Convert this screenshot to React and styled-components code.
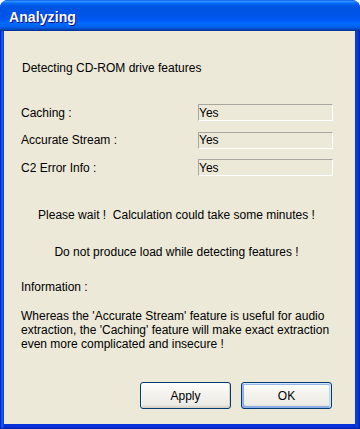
import React from "react";
import styled, { createGlobalStyle } from "styled-components";

const Global = createGlobalStyle`
  html, body { margin: 0; padding: 0; background: #ffffff; }
  #root { width: 360px; height: 429px; }
`;

const Window = styled.div`
  width: 360px;
  height: 429px;
  display: flex;
  flex-direction: column;
  box-sizing: border-box;
  border-radius: 8px 8px 0 0;
  overflow: hidden;
  background: linear-gradient(to right, #0019cf 0px, #0831d9 1px, #166aee 2px, #0831d9 4px, #0831d9 calc(100% - 5px), #0a43e0 calc(100% - 3px), #001ea0 100%);
  font-family: "Liberation Sans", Arial, sans-serif;
  font-size: 12px;
  color: #000;
`;

const TitleBar = styled.div`
  height: 31px;
  flex: none;
  display: flex;
  align-items: center;
  padding: 2px 0 0 9px;
  box-sizing: border-box;
  background: linear-gradient(to bottom, #0058ee 0%, #3593ff 4%, #288eff 6%, #127dff 8%, #036ffc 10%, #0262ee 14%, #0057e5 20%, #0054e3 24%, #0055eb 56%, #005bf5 66%, #026afe 76%, #0062ef 86%, #0052d6 92%, #0040ab 96%, #003092 100%);
`;

const Title = styled.span`
  color: #fff;
  font-weight: bold;
  font-size: 14px;
  letter-spacing: 0.1px;
  text-shadow: 1px 1px #0f1089;
`;

const FrameBottom = styled.div`
  flex: 1;
  display: flex;
  flex-direction: column;
  padding: 0 5px 5px 4px;
  background: linear-gradient(to bottom, transparent calc(100% - 2px), #001ea0 100%);
`;

const Client = styled.div`
  flex: 1;
  background: #ece9d8;
  display: flex;
  flex-direction: column;
  padding: 30px 23px 15px 17px;
  box-sizing: border-box;
  line-height: 14px;
`;

const Line = styled.div`
  margin-top: ${(p) => p.$top || 0}px;
  padding-left: ${(p) => p.$indent || 0}px;
  text-align: ${(p) => (p.$center ? "center" : "left")};
  white-space: nowrap;
`;

const FieldGrid = styled.div`
  margin-top: 29px;
  display: grid;
  grid-template-columns: 177px 135px;
  grid-auto-rows: 17px;
  row-gap: 10.5px;
  align-items: center;
`;

const Label = styled.div`
  white-space: nowrap;
`;

const Field = styled.div`
  height: 17px;
  box-sizing: border-box;
  border: 1px solid;
  border-color: #a7a6a0 #ffffff #ffffff #a7a6a0;
  display: flex;
  align-items: center;
  padding-left: 0px;
`;

const Paragraph = styled.div`
  margin-top: 15px;
  padding-left: 0;
  white-space: nowrap;
  line-height: 14px;
`;

const ButtonRow = styled.div`
  margin-top: auto;
  display: flex;
  justify-content: flex-end;
  gap: 10px;
`;

const Button = styled.button`
  width: 91px;
  height: 27px;
  box-sizing: border-box;
  border: 1px solid #003c74;
  border-radius: 3px;
  font-family: "Liberation Sans", Arial, sans-serif;
  font-size: 12px;
  color: #000;
  padding: 0;
  background: linear-gradient(180deg, #ffffff 0%, #f4f3ee 40%, #ecebe6 86%, #d6d0c5 100%);
  box-shadow: ${(p) =>
    p.$default
      ? "inset -1px 1px #cee7ff, inset 1px 2px #98b8ea, inset -2px 2px #bcd4f6, inset 1px -1px #89ade4, inset 2px -2px #89ade4"
      : "inset -1px -1px #d6d0c5, inset 1px 1px #fff"};
`;

const rows = [
  ["Caching :", "Yes"],
  ["Accurate Stream :", "Yes"],
  ["C2 Error Info :", "Yes"],
];

export default function App() {
  return (
    <>
      <Global />
      <Window>
        <TitleBar>
          <Title>Analyzing</Title>
        </TitleBar>
        <FrameBottom>
          <Client>
            <Line $indent={1}>Detecting CD-ROM drive features</Line>
            <FieldGrid>
              {rows.map(([l, v]) => (
                <React.Fragment key={l}>
                  <Label>{l}</Label>
                  <Field>{v}</Field>
                </React.Fragment>
              ))}
            </FieldGrid>
            <Line $top={32} $center>
              Please wait !&nbsp; Calculation could take some minutes !
            </Line>
            <Line $top={23} $center>
              Do not produce load while detecting features !
            </Line>
            <Line $top={21}>Information :</Line>
            <Paragraph>
              Whereas the 'Accurate Stream' feature is useful for audio
              <br />
              extraction, the 'Caching' feature will make exact extraction
              <br />
              even more complicated and insecure !
            </Paragraph>
            <ButtonRow>
              <Button>Apply</Button>
              <Button $default>OK</Button>
            </ButtonRow>
          </Client>
        </FrameBottom>
      </Window>
    </>
  );
}
